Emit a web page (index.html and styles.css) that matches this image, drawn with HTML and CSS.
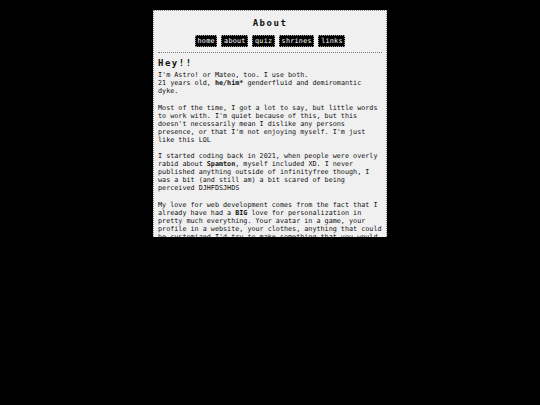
FILE: index.html
```html
<!DOCTYPE html>
<html>
<head>
<meta charset="utf-8">
<link rel="stylesheet" href="styles.css">
</head>
<body>
<div class="page">
  <h1 class="title">About</h1>
  <nav class="nav">
    <a class="btn" href="#">home</a>
    <a class="btn" href="#">about</a>
    <a class="btn" href="#">quiz</a>
    <a class="btn" href="#">shrines</a>
    <a class="btn" href="#">links</a>
  </nav>
  <hr class="rule">
  <h2 class="heading">Hey!!</h2>
  <p>I'm Astro! or Mateo, too. I use both.<br>21 years old, <b>he/him*</b> genderfluid and demiromantic dyke.</p>
  <p>Most of the time, I got a lot to say, but little words to work with. I'm quiet because of this, but this doesn't necessarily mean I dislike any persons presence, or that I'm not enjoying myself. I'm just like this LOL</p>
  <p>I started coding back in 2021, when people were overly rabid about <b>Spamton</b>, myself included XD. I never published anything outside of infinityfree though, I was a bit (and still am) a bit scared of being perceived DJHFDSJHDS</p>
  <p>My love for web development comes from the fact that I already have had a <b>BIG</b> love for personalization in pretty much everything. Your avatar in a game, your profile in a website, your clothes, anything that could be customized I'd try to make something that you would recognize as mine.</p>
</div>
</body>
</html>
```
FILE: styles.css
```css
html, body {
  margin: 0;
  padding: 0;
  background: #000;
}
body {
  font-family: "DejaVu Sans Mono", monospace;
  font-size: 6.75px;
  line-height: 8px;
  color: #111;
}
.page {
  width: 224px;
  height: 226px;
  margin: 10px auto 0;
  padding: 0 4px;
  background: #f0f0f0;
  border: 1px dotted #8a8a8a;
  border-bottom: none;
  overflow: hidden;
}
.title {
  margin: 0;
  padding-top: 7px;
  text-align: center;
  font-size: 9px;
  line-height: 10px;
  letter-spacing: 1.5px;
  font-weight: bold;
}
.nav {
  margin-top: 7px;
  text-align: center;
  line-height: 12px;
}
.btn {
  display: inline-block;
  background: #000;
  color: #fff;
  text-decoration: none;
  letter-spacing: 0.25px;
  padding: 1px 1.5px 1px 1.75px;
  line-height: 8px;
  border: 1px dotted #9a9a9a;
}
.rule {
  margin: 5px 0 0;
  border: none;
  border-top: 1px dotted #777;
  height: 0;
}
.heading {
  margin: 5px 0 0;
  font-size: 9px;
  line-height: 10px;
  letter-spacing: 1.5px;
  font-weight: bold;
}
p {
  margin: 3px 0 8.5px;
}
```
